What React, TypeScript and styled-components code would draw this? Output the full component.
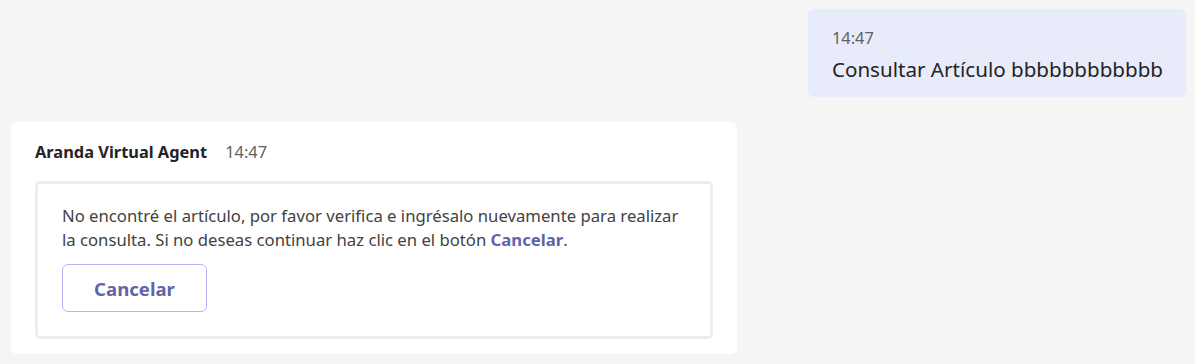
import React from 'react';
import styled, { createGlobalStyle } from 'styled-components';

const GlobalStyle = createGlobalStyle`
    body {
        margin: 0;
        background: #f5f5f5;
        font-family: "Segoe UI", "Noto Sans", "Open Sans", sans-serif;
        color: #242424;
    }
`

const Page = styled.div`
    display: flex;
    flex-direction: column;
    padding: 9px 9px 0 11px;
    height: 364px;
    box-sizing: border-box;
`

const MineRow = styled.div`
    display: flex;
    justify-content: flex-end;
`

const Bubble = styled.div`
    background: #e8ebfa;
    border-radius: 6px;
    padding: 18px 23px 12px 24px;
    display: flex;
    flex-direction: column;
`

const Time = styled.span`
    font-size: 16.4px;
    color: #616161;
    line-height: 22px;
`

const MessageText = styled.div`
    margin-top: 4px;
    font-size: 20.6px;
    line-height: 32px;
    color: #242424;
`

const Card = styled.div`
    margin-top: 25px;
    width: 726px;
    box-sizing: border-box;
    background: #ffffff;
    border-radius: 6px;
    padding: 18px 24px 15px 24px;
`

const Header = styled.div`
    display: flex;
    align-items: baseline;
    gap: 18px;
    margin-bottom: 17px;
    line-height: 24px;
`

const Sender = styled.span`
    font-size: 16.4px;
    font-weight: 700;
    color: #242424;
`

const AdaptiveBox = styled.div`
    border: 3px solid #ededed;
    border-radius: 5px;
    padding: 20px 24px 24px 24px;
`

const Body = styled.p`
    margin: 0 0 12px 0;
    font-size: 16.7px;
    line-height: 24px;
    color: #424242;
`

const Link = styled.span`
    font-weight: 700;
    color: #6264a7;
`

const ActionButton = styled.button`
    display: block;
    width: 145px;
    height: 48px;
    border: 1px solid #b3b5f7;
    border-radius: 6px;
    background: #ffffff;
    color: #6264a7;
    font-family: inherit;
    font-size: 18.6px;
    font-weight: 700;
    cursor: pointer;
`

const App = () => {
    return (
        <>
            <GlobalStyle />
            <Page>
                <MineRow>
                    <Bubble>
                        <Time>14:47</Time>
                        <MessageText>Consultar Artículo bbbbbbbbbbbb</MessageText>
                    </Bubble>
                </MineRow>
                <Card>
                    <Header>
                        <Sender>Aranda Virtual Agent</Sender>
                        <Time>14:47</Time>
                    </Header>
                    <AdaptiveBox>
                        <Body>
                            No encontré el artículo, por favor verifica e ingrésalo nuevamente para realizar la consulta. Si no deseas continuar haz clic en el botón <Link>Cancelar</Link>.
                        </Body>
                        <ActionButton>Cancelar</ActionButton>
                    </AdaptiveBox>
                </Card>
            </Page>
        </>
    )
}

export default App;
